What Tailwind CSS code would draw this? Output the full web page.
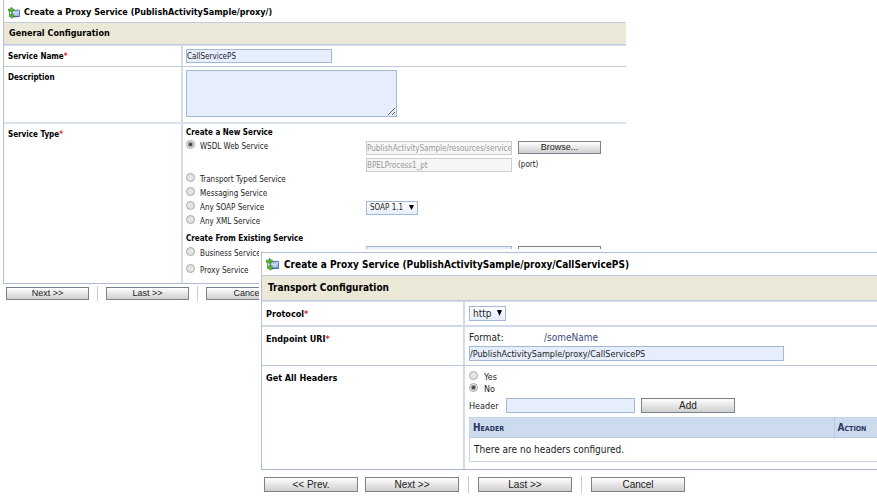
<!DOCTYPE html>
<html lang="en">
<head>
    <meta charset="UTF-8">
    <meta name="viewport" content="width=device-width, initial-scale=1.0">
    <title>Create a Proxy Service</title>
    <script src="https://cdn.jsdelivr.net/npm/@tailwindcss/browser@4"></script>
</head>
<body class="bg-white font-['DejaVu_Sans_Condensed','DejaVu_Sans',sans-serif] text-[#222]">
    <svg class="hidden">
        <symbol id="proxyIcon" viewBox="0 0 12 12">
            <path d="M4 3.5 L11.5 3 V9.5 L4 10 Z" fill="#a9c3ea" stroke="#5577b5" stroke-width=".9"/>
            <path d="M5 4.5 L8.2 7 L11 4" fill="none" stroke="#eef4ff" stroke-width=".9"/>
            <path d="M4.5 9.8 L11.5 9.3" stroke="#3e5fa5" stroke-width="1.1"/>
            <path d="M0.4 2 H3 V0.3 L6.6 3 L3 5.4 V4 H0.4 Z" fill="#58b52f" stroke="#2f7a1e" stroke-width=".6"/>
            <path d="M1.5 7.5 H3.6 V6.2 L6.4 8.8 L3.6 11.4 V10 H1.5 Z" fill="#58b52f" stroke="#2f7a1e" stroke-width=".6"/>
            <path d="M1.6 4 V8" stroke="#4d9c33" stroke-width="1"/>
        </symbol>
    </svg>
    <main class="relative min-h-screen overflow-hidden">

        <!-- General configuration -->
        <form class="ml-[3px] w-[71%] text-[8px] leading-[13px]">
            <div class="border-l border-[#b4c0d6]">
                <h1 class="flex h-[22px] items-center gap-1 pl-1 pt-[3px] text-[9px] font-bold text-black">
                    <svg class="h-3 w-3"><use href="#proxyIcon"/></svg>
                    Create a Proxy Service (PublishActivitySample/proxy/)
                </h1>
                <h2 class="flex h-[23px] items-center border-y border-[#c3ccdc] bg-[#ebe8d8] pl-[5px] text-[9px] font-bold text-black">General Configuration</h2>
                <div class="flex h-[22px] border-t border-b border-t-[#d5dde9] border-b-[#c0c9de]">
                    <label for="serviceName" class="w-[179px] shrink-0 border-r-2 border-[#d3dce9] pl-1 pt-1 font-bold text-black">Service Name<span class="text-[#e03030]">*</span></label>
                    <div class="grow pl-[3px] pt-[3px]">
                        <input id="serviceName" type="text" value="CallServicePS" class="block h-[14px] w-[146px] border border-[#a3b9d3] bg-[#e6eefd]">
                    </div>
                </div>
                <div class="flex border-b-2 border-[#dce3ee]">
                    <label for="description" class="w-[179px] shrink-0 border-r-2 border-[#d3dce9] pl-1 pt-1 font-bold text-black">Description</label>
                    <div class="grow pb-[5px] pl-[3px] pt-[3px]">
                        <textarea id="description" class="block h-[47px] w-[211px] border border-[#a3b9d3] bg-[#e6eefd]"></textarea>
                    </div>
                </div>
                <div class="flex border-b border-[#aebbd0]">
                    <div class="w-[179px] shrink-0 border-r-2 border-[#d3dce9] pl-1 pt-1 font-bold text-black">Service Type<span class="text-[#e03030]">*</span></div>
                    <div class="grow pb-1 pl-[3px] pt-[2px]">
                        <h3 class="h-[14px] font-bold text-black">Create a New Service</h3>
                        <div class="flex h-[17px] items-start">
                            <label class="flex w-[180px] gap-[5px]"><input type="radio" name="type" checked class="size-[9px] appearance-none rounded-full border border-[#aaa] bg-[#e4e4e4] checked:bg-[radial-gradient(circle,#444_0_1px,#e4e4e4_3px)]">WSDL Web Service</label>
                            <input type="text" disabled aria-label="WSDL resource" value="PublishActivitySample/resources/serviceWSDL" class="mt-px h-[14px] w-[146px] border border-[#ccc] bg-[#f6f6f6] text-[#999]">
                            <button type="button" class="ml-[6px] mt-px h-[13px] w-[83px] border border-[#76838f] bg-linear-to-b from-white to-[#cfcfcf] font-['Liberation_Sans',sans-serif] text-[9px] leading-[11px]">Browse...</button>
                        </div>
                        <div class="flex h-4 items-start pl-[180px]">
                            <input id="port" type="text" disabled value="BPELProcess1_pt" class="mt-px h-[14px] w-[146px] border border-[#ccc] bg-[#f6f6f6] text-[#999]">
                            <label for="port" class="ml-[6px] mt-px">(port)</label>
                        </div>
                        <label class="flex h-[14px] gap-[5px]"><input type="radio" name="type" class="size-[9px] appearance-none rounded-full border border-[#aaa] bg-[#e4e4e4] checked:bg-[radial-gradient(circle,#444_0_1px,#e4e4e4_3px)]">Transport Typed Service</label>
                        <label class="flex h-[13px] gap-[5px]"><input type="radio" name="type" class="size-[9px] appearance-none rounded-full border border-[#aaa] bg-[#e4e4e4] checked:bg-[radial-gradient(circle,#444_0_1px,#e4e4e4_3px)]">Messaging Service</label>
                        <div class="flex h-[15px] items-center">
                            <label class="flex w-[180px] gap-[5px]"><input type="radio" name="type" class="size-[9px] appearance-none rounded-full border border-[#aaa] bg-[#e4e4e4] checked:bg-[radial-gradient(circle,#444_0_1px,#e4e4e4_3px)]">Any SOAP Service</label>
                            <div class="relative">
                                <select aria-label="SOAP version" class="block h-[14px] w-[52px] appearance-none border border-[#a3b9d3] bg-linear-to-b from-white to-[#e6eefd] pl-[3px] leading-[12px]"><option>SOAP 1.1</option><option>SOAP 1.2</option></select>
                                <svg class="pointer-events-none absolute right-1 top-1 h-[5px] w-[5px]" viewBox="0 0 5 5"><path d="M0 0h5L2.5 5z"/></svg>
                            </div>
                        </div>
                        <label class="flex h-[17px] gap-[5px]"><input type="radio" name="type" class="size-[9px] appearance-none rounded-full border border-[#aaa] bg-[#e4e4e4] checked:bg-[radial-gradient(circle,#444_0_1px,#e4e4e4_3px)]">Any XML Service</label>
                        <h3 class="h-[14px] font-bold text-black">Create From Existing Service</h3>
                        <div class="flex h-[17px] items-start">
                            <label class="flex w-[180px] gap-[5px] pt-px"><input type="radio" name="type" class="size-[9px] appearance-none rounded-full border border-[#aaa] bg-[#e4e4e4] checked:bg-[radial-gradient(circle,#444_0_1px,#e4e4e4_3px)]">Business Service</label>
                            <input type="text" aria-label="Business service" class="h-[14px] w-[146px] border border-[#a3b9d3] bg-[#e6eefd]">
                            <button type="button" aria-label="Browse" class="ml-[6px] h-[13px] w-[83px] border border-[#76838f] bg-linear-to-b from-white to-[#cfcfcf]"></button>
                        </div>
                        <label class="flex h-4 gap-[5px] pt-px"><input type="radio" name="type" class="size-[9px] appearance-none rounded-full border border-[#aaa] bg-[#e4e4e4] checked:bg-[radial-gradient(circle,#444_0_1px,#e4e4e4_3px)]">Proxy Service</label>
                    </div>
                </div>
            </div>
            <div class="flex items-center gap-2 pl-[3px] pt-[2px] font-['Liberation_Sans',sans-serif] text-[9px]">
                <button type="button" class="h-[13px] w-[83px] border border-[#76838f] bg-linear-to-b from-white to-[#cfcfcf] leading-[11px]">Next &gt;&gt;</button>
                <span class="h-[15px] w-px bg-[#c0cbdc]"></span>
                <button type="button" class="h-[13px] w-[83px] border border-[#76838f] bg-linear-to-b from-white to-[#cfcfcf] leading-[11px]">Last &gt;&gt;</button>
                <span class="h-[15px] w-px bg-[#c0cbdc]"></span>
                <button type="button" class="h-[13px] w-[83px] border border-[#76838f] bg-linear-to-b from-white to-[#cfcfcf] leading-[11px]">Cancel</button>
            </div>
        </form>

        <!-- Transport configuration, lies over the first form -->
        <form class="absolute left-[259px] right-0 top-[249px] bg-white pl-[2px] pt-[3px] text-[10px] leading-[12px]">
            <div class="border-l border-t border-[#b4c0d6]">
                <h1 class="flex h-[22px] items-center gap-[5px] pl-1 pt-px text-[10px] font-bold text-black">
                    <svg class="size-[13px]"><use href="#proxyIcon"/></svg>
                    Create a Proxy Service (PublishActivitySample/proxy/CallServicePS)
                </h1>
                <h2 class="flex h-[26px] items-center border-y border-[#c3ccdc] bg-[#ebe8d8] pl-[6px] text-[10px] font-bold text-black">Transport Configuration</h2>
                <div class="flex h-[26px] border-b-2 border-t border-t-[#d5dde9] border-b-[#d0d9e8]">
                    <label for="protocol" class="w-[203px] shrink-0 border-r-2 border-[#d3dce9] pl-1 pt-[6px] text-[9px] font-bold text-black">Protocol<span class="text-[#e03030]">*</span></label>
                    <div class="grow pl-1 pt-1">
                        <div class="relative w-[37px]">
                            <select id="protocol" class="block h-[15px] w-[37px] appearance-none border border-[#a3b9d3] bg-linear-to-b from-white to-[#e6eefd] pl-[3px] leading-[12px]"><option>http</option><option>jms</option></select>
                            <svg class="pointer-events-none absolute right-1 top-1 h-[6px] w-[5px]" viewBox="0 0 5 6"><path d="M0 0h5L2.5 6z"/></svg>
                        </div>
                    </div>
                </div>
                <div class="flex border-b border-[#b9c6da]">
                    <label for="endpoint" class="w-[203px] shrink-0 border-r-2 border-[#d3dce9] pl-1 pt-[6px] text-[9px] font-bold text-black">Endpoint URI<span class="text-[#e03030]">*</span></label>
                    <div class="grow pb-1 pl-1 pt-[5px]">
                        <div class="flex h-[14px]"><span class="w-[75px]">Format:</span><span class="text-[#3b4a78]">/someName</span></div>
                        <input id="endpoint" type="text" value="/PublishActivitySample/proxy/CallServicePS" class="block h-[15px] w-[315px] border border-[#a3b9d3] bg-[#e6eefd] text-[9px]">
                    </div>
                </div>
                <div class="flex border-b border-[#a9b8cd]">
                    <div class="w-[203px] shrink-0 border-r-2 border-[#d3dce9] pl-1 pt-[6px] text-[9px] font-bold text-black">Get All Headers</div>
                    <div class="grow pb-[7px] pl-1 pt-[5px]">
                        <label class="flex h-3 gap-[6px] text-[9px]"><input type="radio" name="all" class="size-[9px] appearance-none rounded-full border border-[#aaa] bg-[#e4e4e4] checked:bg-[radial-gradient(circle,#444_0_1px,#e4e4e4_3px)]">Yes</label>
                        <label class="flex h-[15px] gap-[6px] text-[9px]"><input type="radio" name="all" checked class="size-[9px] appearance-none rounded-full border border-[#aaa] bg-[#e4e4e4] checked:bg-[radial-gradient(circle,#444_0_1px,#e4e4e4_3px)]">No</label>
                        <div class="flex h-[19px] items-start">
                            <label for="header" class="w-[37px] pt-[2px] text-[9px]">Header</label>
                            <input id="header" type="text" class="h-[15px] w-[129px] border border-[#a3b9d3] bg-[#e6eefd]">
                            <button type="button" class="ml-[6px] h-[15px] w-[94px] border border-[#76838f] bg-linear-to-b from-white to-[#cfcfcf] font-['Liberation_Sans',sans-serif]">Add</button>
                        </div>
                        <table class="w-full border-collapse border border-[#c5d5e8] border-r-0">
                            <thead class="bg-[#cedbef] text-left text-[#26365f] [font-variant:small-caps]">
                                <tr class="h-5">
                                    <th class="border-b border-[#b4cbe4] pl-[3px]">Header</th>
                                    <th class="w-[43px] border-b border-l border-[#b4cbe4] pl-[3px]">Action</th>
                                </tr>
                            </thead>
                            <tbody>
                                <tr class="h-6">
                                    <td colspan="2" class="pl-1">There are no headers configured.</td>
                                </tr>
                            </tbody>
                        </table>
                    </div>
                </div>
            </div>
            <div class="flex items-center pb-[5px] pl-[3px] pt-[6px] font-['Liberation_Sans',sans-serif]">
                <button type="button" class="h-[15px] w-[94px] border border-[#76838f] bg-linear-to-b from-white to-[#cfcfcf]">&lt;&lt; Prev.</button>
                <button type="button" class="ml-[7px] h-[15px] w-[94px] border border-[#76838f] bg-linear-to-b from-white to-[#cfcfcf]">Next &gt;&gt;</button>
                <span class="mx-[9px] h-[17px] w-px bg-[#c0cbdc]"></span>
                <button type="button" class="h-[15px] w-[94px] border border-[#76838f] bg-linear-to-b from-white to-[#cfcfcf]">Last &gt;&gt;</button>
                <span class="mx-[9px] h-[17px] w-px bg-[#c0cbdc]"></span>
                <button type="button" class="h-[15px] w-[94px] border border-[#76838f] bg-linear-to-b from-white to-[#cfcfcf]">Cancel</button>
            </div>
        </form>
    </main>
</body>
</html>
